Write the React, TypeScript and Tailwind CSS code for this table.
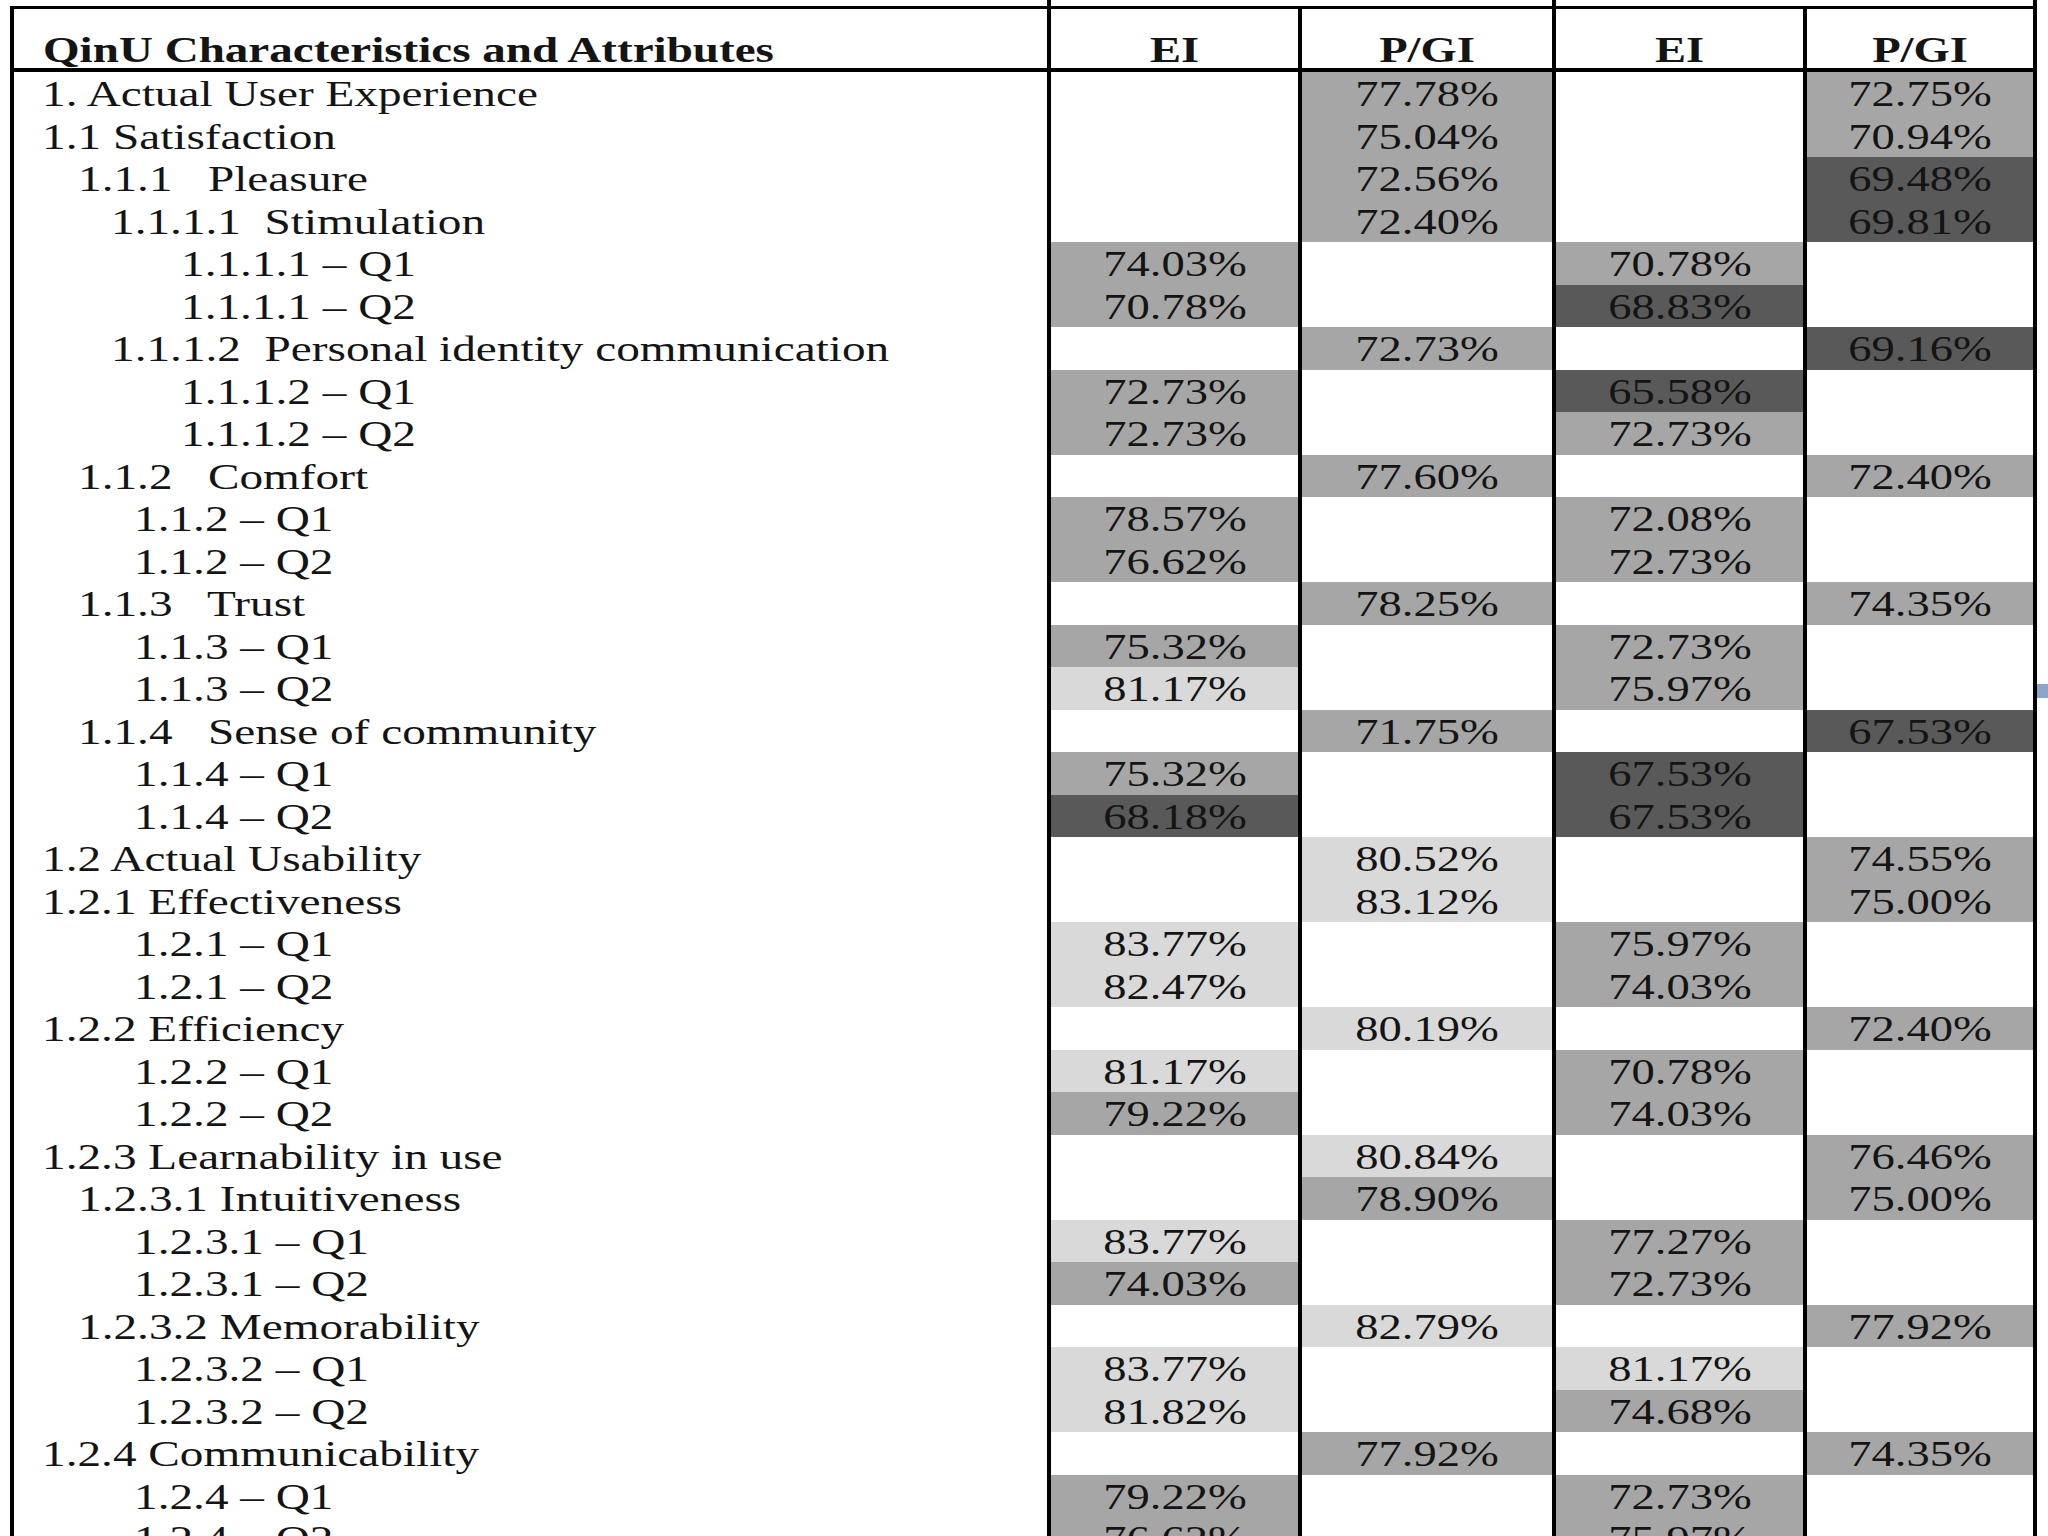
type Shade = "m" | "d" | "l";
type Cell = [string, Shade] | null;
type Row = { label: string; pad: string; cells: [Cell, Cell, Cell, Cell] };

// indent classes, measured from the left edge of the first column
const L0 = "pl-[28px]";
const L1 = "pl-[64px]";
const L2 = "pl-[97px]";
const LQ = "pl-[120px]";
const LQ2 = "pl-[167px]";

const shadeBg: Record<Shade, string> = {
  m: "bg-[#a6a6a6]",
  d: "bg-[#595959]",
  l: "bg-[#d9d9d9]",
};

const rows: Row[] = [
  { label: "1. Actual User Experience", pad: L0, cells: [null, ["77.78%", "m"], null, ["72.75%", "m"]] },
  { label: "1.1 Satisfaction", pad: L0, cells: [null, ["75.04%", "m"], null, ["70.94%", "m"]] },
  { label: "1.1.1   Pleasure", pad: L1, cells: [null, ["72.56%", "m"], null, ["69.48%", "d"]] },
  { label: "1.1.1.1  Stimulation", pad: L2, cells: [null, ["72.40%", "m"], null, ["69.81%", "d"]] },
  { label: "1.1.1.1 – Q1", pad: LQ2, cells: [["74.03%", "m"], null, ["70.78%", "m"], null] },
  { label: "1.1.1.1 – Q2", pad: LQ2, cells: [["70.78%", "m"], null, ["68.83%", "d"], null] },
  { label: "1.1.1.2  Personal identity communication", pad: L2, cells: [null, ["72.73%", "m"], null, ["69.16%", "d"]] },
  { label: "1.1.1.2 – Q1", pad: LQ2, cells: [["72.73%", "m"], null, ["65.58%", "d"], null] },
  { label: "1.1.1.2 – Q2", pad: LQ2, cells: [["72.73%", "m"], null, ["72.73%", "m"], null] },
  { label: "1.1.2   Comfort", pad: L1, cells: [null, ["77.60%", "m"], null, ["72.40%", "m"]] },
  { label: "1.1.2 – Q1", pad: LQ, cells: [["78.57%", "m"], null, ["72.08%", "m"], null] },
  { label: "1.1.2 – Q2", pad: LQ, cells: [["76.62%", "m"], null, ["72.73%", "m"], null] },
  { label: "1.1.3   Trust", pad: L1, cells: [null, ["78.25%", "m"], null, ["74.35%", "m"]] },
  { label: "1.1.3 – Q1", pad: LQ, cells: [["75.32%", "m"], null, ["72.73%", "m"], null] },
  { label: "1.1.3 – Q2", pad: LQ, cells: [["81.17%", "l"], null, ["75.97%", "m"], null] },
  { label: "1.1.4   Sense of community", pad: L1, cells: [null, ["71.75%", "m"], null, ["67.53%", "d"]] },
  { label: "1.1.4 – Q1", pad: LQ, cells: [["75.32%", "m"], null, ["67.53%", "d"], null] },
  { label: "1.1.4 – Q2", pad: LQ, cells: [["68.18%", "d"], null, ["67.53%", "d"], null] },
  { label: "1.2 Actual Usability", pad: L0, cells: [null, ["80.52%", "l"], null, ["74.55%", "m"]] },
  { label: "1.2.1 Effectiveness", pad: L0, cells: [null, ["83.12%", "l"], null, ["75.00%", "m"]] },
  { label: "1.2.1 – Q1", pad: LQ, cells: [["83.77%", "l"], null, ["75.97%", "m"], null] },
  { label: "1.2.1 – Q2", pad: LQ, cells: [["82.47%", "l"], null, ["74.03%", "m"], null] },
  { label: "1.2.2 Efficiency", pad: L0, cells: [null, ["80.19%", "l"], null, ["72.40%", "m"]] },
  { label: "1.2.2 – Q1", pad: LQ, cells: [["81.17%", "l"], null, ["70.78%", "m"], null] },
  { label: "1.2.2 – Q2", pad: LQ, cells: [["79.22%", "m"], null, ["74.03%", "m"], null] },
  { label: "1.2.3 Learnability in use", pad: L0, cells: [null, ["80.84%", "l"], null, ["76.46%", "m"]] },
  { label: "1.2.3.1 Intuitiveness", pad: L1, cells: [null, ["78.90%", "m"], null, ["75.00%", "m"]] },
  { label: "1.2.3.1 – Q1", pad: LQ, cells: [["83.77%", "l"], null, ["77.27%", "m"], null] },
  { label: "1.2.3.1 – Q2", pad: LQ, cells: [["74.03%", "m"], null, ["72.73%", "m"], null] },
  { label: "1.2.3.2 Memorability", pad: L1, cells: [null, ["82.79%", "l"], null, ["77.92%", "m"]] },
  { label: "1.2.3.2 – Q1", pad: LQ, cells: [["83.77%", "l"], null, ["81.17%", "l"], null] },
  { label: "1.2.3.2 – Q2", pad: LQ, cells: [["81.82%", "l"], null, ["74.68%", "m"], null] },
  { label: "1.2.4 Communicability", pad: L0, cells: [null, ["77.92%", "m"], null, ["74.35%", "m"]] },
  { label: "1.2.4 – Q1", pad: LQ, cells: [["79.22%", "m"], null, ["72.73%", "m"], null] },
  { label: "1.2.4 – Q2", pad: LQ, cells: [["76.62%", "m"], null, ["75.97%", "m"], null] },
];

const headers = ["EI", "P/GI", "EI", "P/GI"];

export default function App() {
  return (
    <div className="relative h-[1536px] w-[2048px] overflow-hidden bg-white font-['Liberation_Serif','Times_New_Roman',serif] text-[35px] text-[#141414]">
      {/* tail of the grouped header row above */}
      <div className="ml-[1047px] flex h-[6px]">
        <div className="w-[505px] border-l-4 border-black" />
        <div className="w-[485px] border-x-4 border-black" />
      </div>

      <div className="ml-[10px] grid w-[2027px] grid-cols-[1033px_247px_250px_247px_226px] gap-x-[4px] border-x-4 border-t-[3px] border-black bg-black">
        <div className="flex h-[63px] items-end border-b-4 border-black bg-white pl-[29px]">
          <span className="inline-block origin-left scale-x-[1.345] whitespace-pre font-bold leading-[35px]">
            QinU Characteristics and Attributes
          </span>
        </div>
        {headers.map((h, i) => (
          <div key={i} className="flex h-[63px] items-end justify-center border-b-4 border-black bg-white">
            <span className="inline-block scale-x-[1.33] font-bold leading-[35px]">{h}</span>
          </div>
        ))}

        {rows.map((r, ri) => (
          <Line key={ri} row={r} />
        ))}
      </div>

      {/* small handle on the right edge */}
      <div className="absolute left-[2037px] top-[684px] h-[14px] w-[11px] bg-[#8ea5cb]" />
    </div>
  );
}

function Line({ row }: { row: Row }) {
  return (
    <>
      <div className={`h-[42.5px] bg-white pt-[3px] leading-[40px] ${row.pad}`}>
        <span className="inline-block origin-left scale-x-[1.35] whitespace-pre">{row.label}</span>
      </div>
      {row.cells.map((c, i) => (
        <div
          key={i}
          className={`flex h-[42.5px] justify-center pt-[3px] leading-[40px] ${c ? shadeBg[c[1]] : "bg-white"}`}
        >
          {c && <span className="inline-block scale-x-[1.33]">{c[0]}</span>}
        </div>
      ))}
    </>
  );
}
